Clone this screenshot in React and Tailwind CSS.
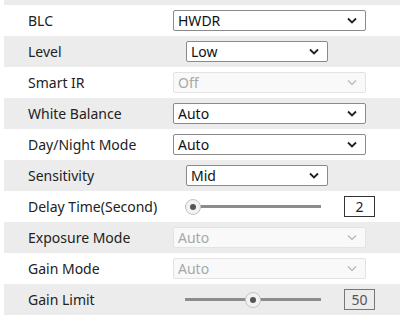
const ROWS = [
  { label: 'BLC', type: 'select', value: 'HWDR' },
  { label: 'Level', type: 'select', value: 'Low', short: true },
  { label: 'Smart IR', type: 'select', value: 'Off', disabled: true },
  { label: 'White Balance', type: 'select', value: 'Auto' },
  { label: 'Day/Night Mode', type: 'select', value: 'Auto' },
  { label: 'Sensitivity', type: 'select', value: 'Mid', short: true },
  { label: 'Delay Time(Second)', type: 'slider', value: 2, pct: 0 },
  { label: 'Exposure Mode', type: 'select', value: 'Auto', disabled: true },
  { label: 'Gain Mode', type: 'select', value: 'Auto', disabled: true },
  { label: 'Gain Limit', type: 'slider', value: 50, pct: 50, dim: true },
]

function Chevron({ disabled }) {
  return (
    <svg width="10" height="7" viewBox="0 0 10 7" className="shrink-0">
      <path
        d="M1 1.5 L5 5.5 L9 1.5"
        fill="none"
        stroke={disabled ? '#b5b5b5' : '#222'}
        strokeWidth={disabled ? 1.2 : 1.8}
      />
    </svg>
  )
}

function Select({ value, disabled, short }) {
  return (
    <div
      className={`h-[21px] flex items-center justify-between pl-[4px] pr-[8px] rounded-[2px] border ${
        short ? 'w-[142px] ml-[13px]' : 'w-[193px]'
      } ${
        disabled
          ? 'border-[#e3e3e3] bg-[#f9f9f9] text-[#a8a8a8]'
          : 'border-[#8a8a8a] bg-white text-[#111]'
      }`}
    >
      <span className="text-[14px] leading-none">{value}</span>
      <Chevron disabled={disabled} />
    </div>
  )
}

function Slider({ value, pct, dim }) {
  return (
    <div className="flex items-center">
      <div className="relative w-[136px] h-[16px] ml-[12px] flex items-center">
        <div className="w-full h-[3px] bg-[#8c8c8c]" />
        {/* thumb */}
        <div
          className="absolute top-0 w-[16px] h-[16px] -ml-[8px] rounded-full border border-[#c4c4c4] bg-[#f2f2f2] flex items-center justify-center"
          style={{ left: `calc(${pct}% + ${pct === 0 ? 8 : 0}px)` }}
        >
          <div className="w-[6px] h-[6px] rounded-full bg-[#555]" />
        </div>
      </div>
      <div
        className={`ml-[23px] w-[31px] h-[21px] flex items-center justify-center border text-[14px] leading-none ${
          dim ? 'border-[#777] text-[#555]' : 'border-[#333] bg-white text-[#1a1a40]'
        }`}
      >
        {value}
      </div>
    </div>
  )
}

export default function App() {
  return (
    <div
      className="w-[400px] h-[318px] bg-white overflow-hidden"
      style={{ fontFamily: '"Noto Sans", "Open Sans", sans-serif' }}
    >
      <div className="ml-[4px]">
        <div className="h-[5px] bg-[#ececec]" />
        {ROWS.map((row, i) => (
          <div
            key={row.label}
            className={`h-[31px] flex items-center ${i % 2 === 1 ? 'bg-[#ececec]' : 'bg-white'}`}
          >
            <div className="w-[169px] pl-[24px] text-[14px] text-[#222] whitespace-nowrap">
              {row.label}
            </div>
            {row.type === 'select' ? (
              <Select value={row.value} disabled={row.disabled} short={row.short} />
            ) : (
              <Slider value={row.value} pct={row.pct} dim={row.dim} />
            )}
          </div>
        ))}
      </div>
    </div>
  )
}
